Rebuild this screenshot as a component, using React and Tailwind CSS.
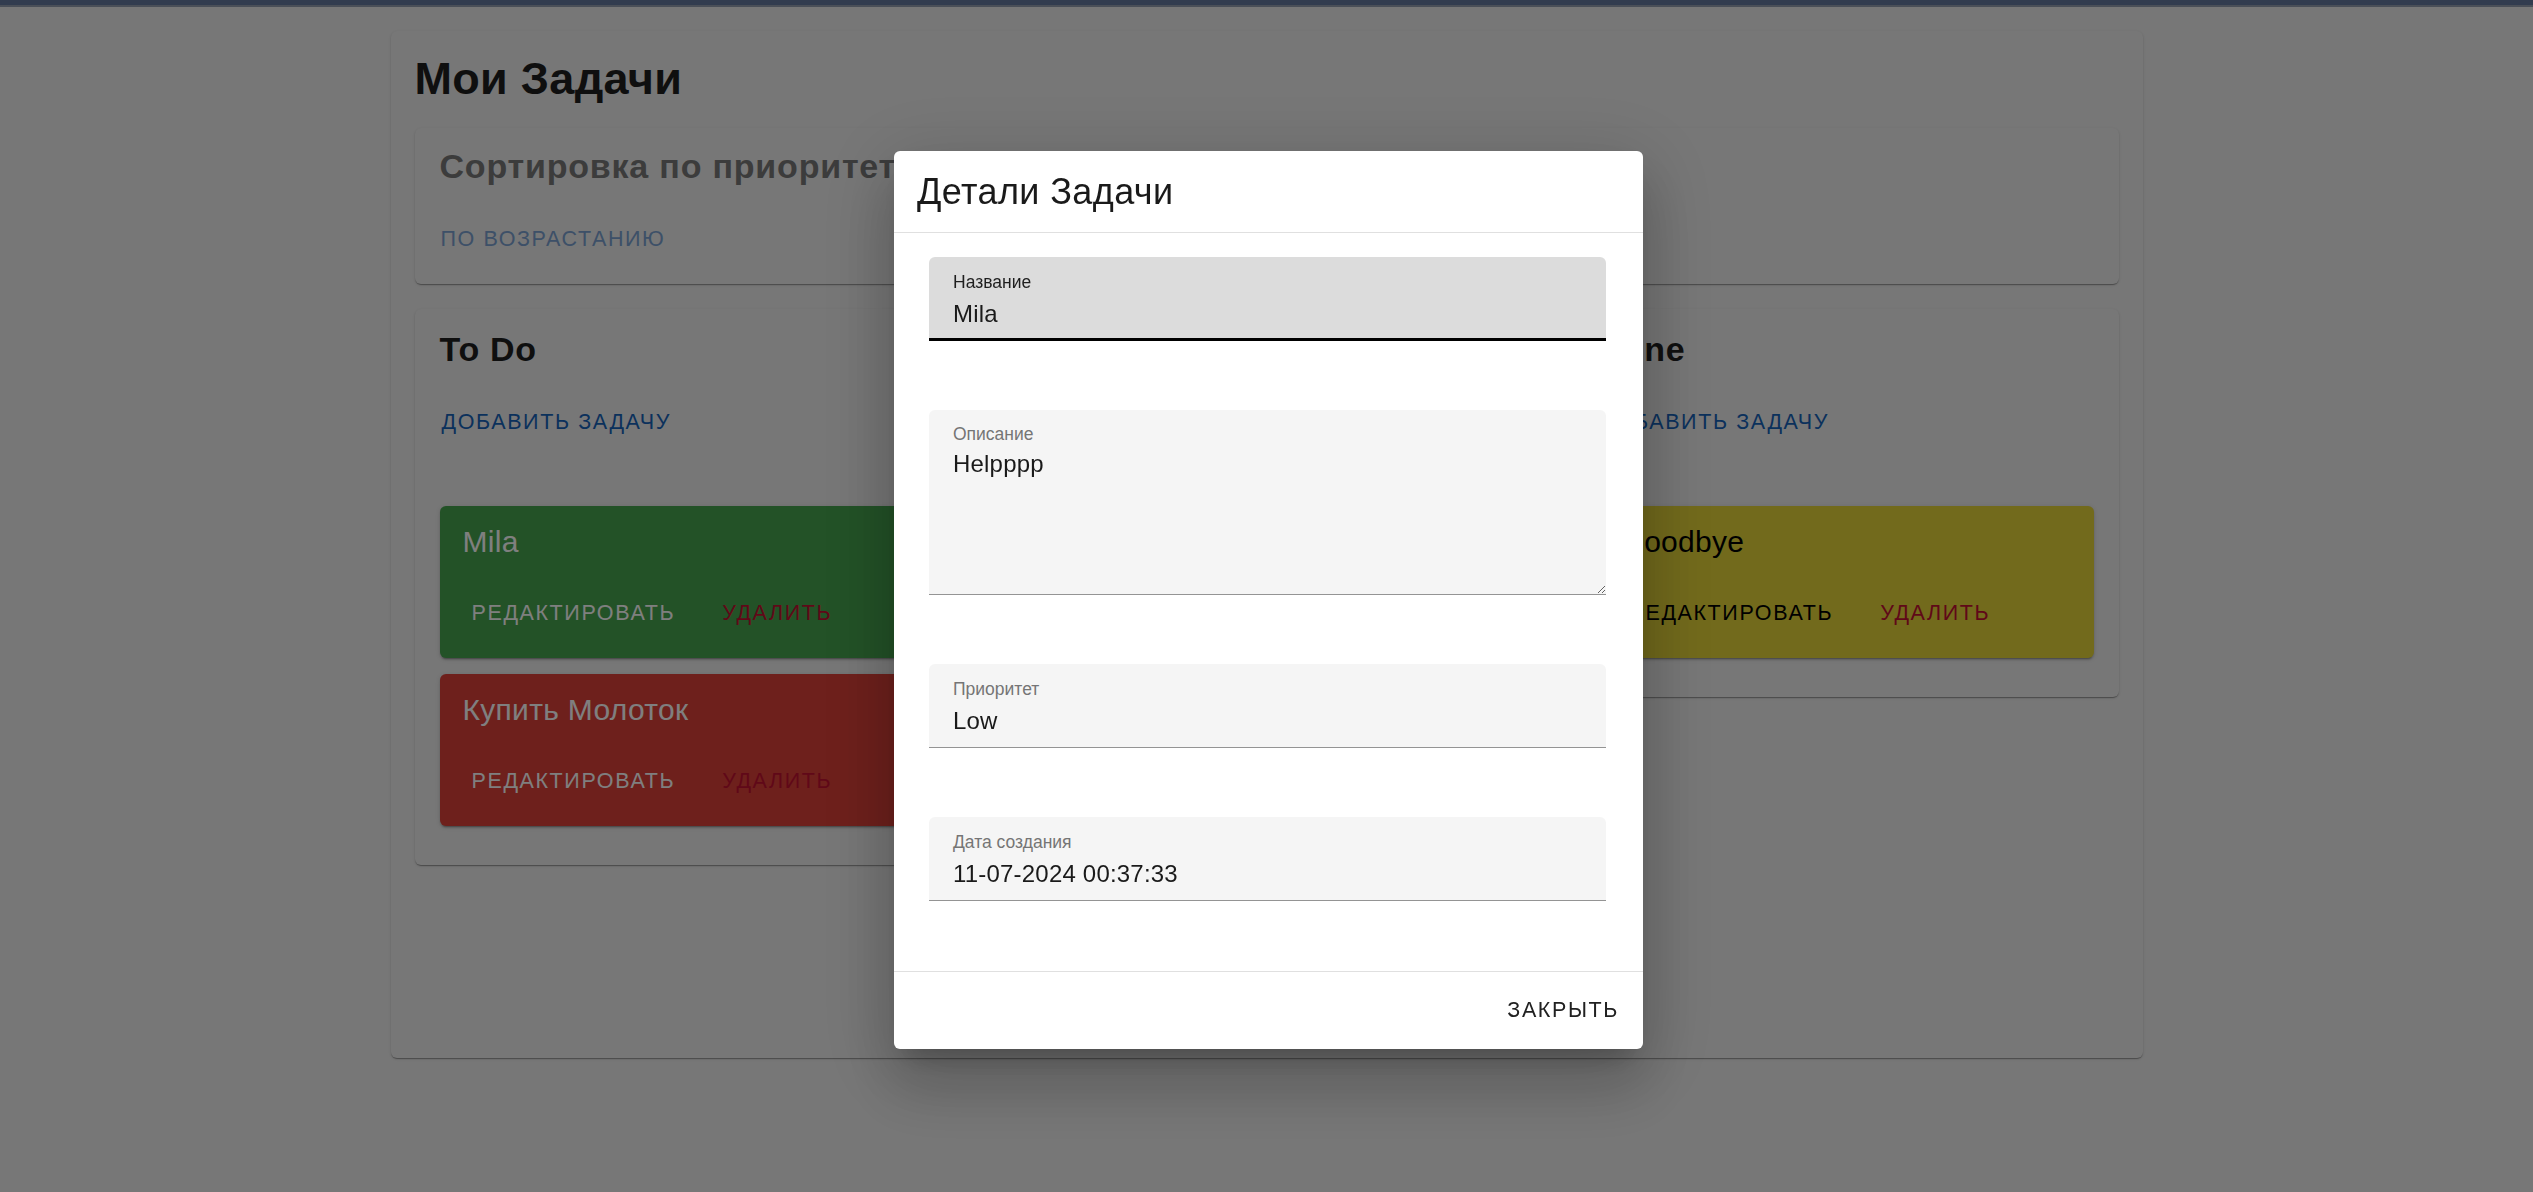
import React from "react";

const paperShadow =
  "shadow-[0_2px_1px_-1px_rgba(0,0,0,0.2),0_1px_1px_0_rgba(0,0,0,0.14),0_1px_3px_0_rgba(0,0,0,0.12)]";
const cardShadow =
  "shadow-[0_3px_1px_-2px_rgba(0,0,0,0.2),0_2px_2px_0_rgba(0,0,0,0.14),0_1px_5px_0_rgba(0,0,0,0.12)]";

const columns = [
  {
    title: "To Do",
    tasks: [
      { name: "Mila", bg: "bg-[#46a44e]", text: "text-white" },
      { name: "Купить Молоток", bg: "bg-[#dc4038]", text: "text-white" },
    ],
  },
  { title: "In Progress", tasks: [] },
  {
    title: "Done",
    tasks: [{ name: "Goodbye", bg: "bg-[#e4d438]", text: "text-black" }],
  },
];

const btn = "uppercase text-[21.5px] leading-[25px] tracking-[1.6px]";

const TaskCard = ({ task }) => (
  <div className={`rounded-[6px] ${task.bg} ${task.text} ${cardShadow} px-[23px] pt-[18px] pb-[32px]`}>
    <div className="text-[30px] leading-[35px] tracking-[0.3px]">{task.name}</div>
    <div className="mt-[42px] flex gap-[47px] pl-[9px]">
      <button className={btn}>Редактировать</button>
      <button className={`${btn} text-[#c01030]`}>Удалить</button>
    </div>
  </div>
);

const Column = ({ column }) => (
  <div className={`rounded-[6px] bg-[#eeeeee] ${paperShadow} px-[25px] pt-[21px] pb-[39px]`}>
    <h2 className="text-[34px] font-bold leading-[39px] tracking-[0.7px] text-[#1f1f1f]">{column.title}</h2>
    <button className={`${btn} mt-[41px] ml-[2px] block text-[#1662b8]`}>Добавить задачу</button>
    <div className="mt-[71px] flex flex-col gap-[16px]">
      {column.tasks.map((t) => (
        <TaskCard key={t.name} task={t} />
      ))}
    </div>
  </div>
);

const Field = ({ label, value, focused, multiline }) => (
  <div
    className={`flex flex-col rounded-t-[6px] ${
      focused ? "bg-[#dcdcdc] border-b-[3px] border-black" : "bg-[#f5f5f5] border-b border-[#949494]"
    } ${multiline ? "h-[185px]" : "h-[84px]"}`}
  >
    <label
      className={`pl-[24px] ${multiline ? "pt-[14px]" : "pt-[15px]"} text-[17.5px] leading-[20px] ${
        focused ? "text-[#1f1f1f]" : "text-[#757575]"
      }`}
    >
      {label}
    </label>
    {multiline ? (
      <textarea
        readOnly
        defaultValue={value}
        className="mt-[6px] w-full flex-1 resize-y bg-transparent pl-[24px] text-[24px] leading-[28px] tracking-[0.2px] text-[#1a1a1a] outline-none"
      />
    ) : (
      <input
        readOnly
        defaultValue={value}
        className="mt-[8px] h-[28px] w-full bg-transparent pl-[24px] text-[24px] leading-[28px] tracking-[0.2px] text-[#1a1a1a] outline-none"
      />
    )}
  </div>
);

export default function App() {
  return (
    <div className="min-h-screen bg-[#eeeeee] font-['Liberation_Sans',Arial,sans-serif]">
      <div className="box-content h-[5px] border-b-2 border-[#949fb0] bg-[#64789f]" />

      <main className={`mx-auto mt-[24px] h-[1027px] w-[1752px] rounded-[6px] bg-[#eeeeee] ${paperShadow} px-[24px] pt-[22px]`}>
        <h1 className="text-[45px] font-bold leading-[52px] tracking-[0.3px] text-[#1f1f1f]">Мои Задачи</h1>

        {/* Sorting */}
        <section className={`mt-[23px] rounded-[6px] bg-[#eeeeee] ${paperShadow} px-[25px] pt-[19px] pb-[32px]`}>
          <h2 className="text-[34px] font-bold leading-[39px] tracking-[0.8px] text-[#787878]">Сортировка по приоритету</h2>
          <button className={`${btn} mt-[41px] block pl-[1px] text-[#7aa0d0]`}>По возрастанию</button>
        </section>

        <div className="mt-[25px] grid grid-cols-3 items-start gap-[33px]">
          {columns.map((c) => (
            <Column key={c.title} column={c} />
          ))}
        </div>
      </main>

      {/* Task details dialog */}
      <div className="fixed inset-0 flex items-start justify-center bg-black/50 pt-[151px]">
        <div className="ml-[4px] flex h-[898px] w-[749px] flex-col rounded-[6px] bg-white shadow-[0_18px_24px_-11px_rgba(0,0,0,0.2),0_38px_61px_5px_rgba(0,0,0,0.14),0_14px_74px_13px_rgba(0,0,0,0.12)]">
          <h2 className="border-b border-[#e0e0e0] px-[23px] py-[20px] text-[36px] leading-[41px] tracking-[0.4px] text-[#1a1a1a]">
            Детали Задачи
          </h2>
          <div className="flex flex-col gap-[69px] border-b border-[#e0e0e0] pl-[35px] pr-[37px] pt-[24px] pb-[70px]">
            <Field label="Название" value="Mila" focused />
            <Field label="Описание" value="Helpppp" multiline />
            <Field label="Приоритет" value="Low" />
            <Field label="Дата создания" value="11-07-2024 00:37:33" />
          </div>
          <div className="flex flex-1 items-center justify-end pr-[24px]">
            <button className={`${btn} text-[#212121]`}>Закрыть</button>
          </div>
        </div>
      </div>
    </div>
  );
}
